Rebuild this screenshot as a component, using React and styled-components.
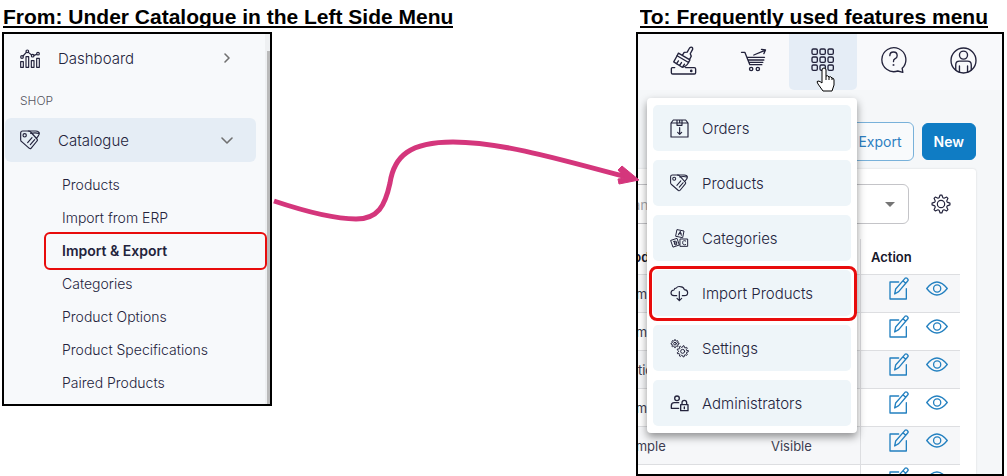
import React from 'react'
import styled, { createGlobalStyle } from 'styled-components'

const GlobalStyle = createGlobalStyle`
    * {
        box-sizing: border-box;
    }
    body {
        margin: 0;
        background: #fff;
        font-family: Inter, 'Liberation Sans', sans-serif;
        color: #23233c;
    }
    a {
        color: inherit;
        text-decoration: none;
    }
    ul {
        margin: 0;
        padding: 0;
        list-style: none;
    }
`

const Page = styled.main`
    padding: 0 3px 0 2px;
`

const Headings = styled.header`
    display: flex;
    justify-content: space-between;
    padding: 0 16px 0 1px;
    height: 32px;
`

const Heading = styled.h2`
    margin: 0;
    height: 28px;
    padding-top: 4px;
    overflow: hidden;
    border-bottom: 2px solid #000;
    font: bold 21px/26px 'Liberation Sans', Arial, sans-serif;
    white-space: nowrap;
    color: #000;
`

const Columns = styled.div`
    display: grid;
    grid-template-columns: 270px 1fr 368px;
    align-items: start;
`

const Icon = styled.svg`
    display: block;
    flex: none;
    fill: none;
    stroke: currentColor;
    stroke-width: ${props => props.$stroke || 4};
    stroke-linejoin: round;
    stroke-linecap: round;
`

/* left side menu */

const SidePanel = styled.nav`
    display: grid;
    grid-template-columns: 1fr 5px;
    border: 2px solid #000;
    background: #f7f9fb;
`

const SideMenu = styled.div`
    padding: 2px 0 5px;
`

const SideLink = styled.a`
    display: grid;
    grid-template-columns: 38px 1fr 12px;
    align-items: center;
    height: 44px;
    margin: 0 9px 0 1px;
    padding: 0 23px 0 15px;
    border-radius: 6px;
    font-size: 15px;
    font-weight: 300;
    background: ${props => (props.$open ? '#e5edf5' : 'transparent')};
    svg:last-child {
        color: #707070;
    }
`

const SideCaption = styled.div`
    padding: 14px 16px 10px;
    font-size: 12px;
    line-height: 14px;
    font-weight: 300;
    color: #55555f;
`

const SubMenu = styled.ul`
    padding: 6px 0 0 40px;
`

const SubLink = styled.a`
    display: block;
    position: relative;
    padding-left: 18px;
    font-size: 14px;
    line-height: 33px;
    font-weight: ${props => (props.$active ? 600 : 300)};
    &::after {
        content: '';
        display: ${props => (props.$active ? 'block' : 'none')};
        position: absolute;
        inset: -2px -2px -3px 0;
        border: 2px solid #e80c0c;
        border-radius: 6px;
    }
`

const ScrollTrack = styled.div`
    padding: 17px 0 0 2px;
    background: #eef0f2;
    &::before {
        content: '';
        display: block;
        height: 100%;
        background: #bababa;
    }
`

const Arrow = styled.svg`
    position: relative;
    z-index: 3;
    display: block;
    width: 100%;
    overflow: visible;
    fill: none;
    stroke: #d4367c;
    stroke-width: 5;
`

/* right window */

const AppPanel = styled.section`
    position: relative;
    display: flex;
    justify-content: flex-end;
    height: calc(100vh - 32px);
    overflow: hidden;
    border: 2px solid #000;
    background: #f5f7f9;
`

const AppContent = styled.div`
    flex: none;
    width: 432px;
`

const TopBar = styled.div`
    display: flex;
    justify-content: flex-end;
    gap: 2px;
    padding-right: 5px;
    background: #f8f9fb;
`

const TopButton = styled.button`
    display: grid;
    place-items: center;
    width: 68px;
    height: 56px;
    padding: 0 0 4px;
    border: 0;
    border-radius: 0 0 5px 5px;
    color: #23233c;
    background: ${props => (props.$active ? '#e5edf6' : 'transparent')};
`

const Actions = styled.div`
    display: flex;
    justify-content: flex-end;
    align-items: center;
    gap: 8px;
    padding: 32px 26px 8px;
`

const Button = styled.button`
    height: ${props => (props.$primary ? '37px' : '39px')};
    padding: 0 11px;
    border: 1px solid ${props => (props.$primary ? '#0f7cc4' : '#78b1da')};
    border-radius: 6px;
    font: ${props => (props.$primary ? 600 : 400)} 14px/20px Inter, sans-serif;
    color: ${props => (props.$primary ? '#fff' : '#2d7fc1')};
    background: ${props => (props.$primary ? '#0f7cc4' : '#f8fafc')};
`

const Card = styled.div`
    margin: 0 26px 0 6px;
    padding: 15px 16px 0;
    border-radius: 3px;
    background: #fff;
    box-shadow: 0 0 2px rgba(0, 0, 0, 0.15);
`

const Filters = styled.div`
    display: flex;
    gap: 13px;
    align-items: center;
    padding: 0 9px 15px 0;
`

const SearchInput = styled.input`
    flex: 1;
    min-width: 0;
    height: 40px;
    padding: 0 25px;
    border: 1px solid #c4c4c8;
    border-radius: 6px;
    font: 14px Inter, sans-serif;
    &::placeholder {
        color: #a8a8ac;
        opacity: 1;
    }
`

const SelectWrap = styled.label`
    display: grid;
    grid-template-columns: 1fr 10px;
    align-items: center;
    width: 100px;
    padding-right: 13px;
    border: 1px solid #c4c4c8;
    border-radius: 6px;
    fill: #757575;
`

const Select = styled.select`
    appearance: none;
    height: 38px;
    border: 0;
    background: transparent;
`

const SettingsButton = styled.button`
    padding: 0;
    margin-left: 9px;
    border: 0;
    color: #23233c;
    background: transparent;
`

const Table = styled.table`
    width: 100%;
    table-layout: fixed;
    border-collapse: separate;
    border-spacing: 0;
    font-size: 13px;
    th, td {
        padding: 0;
        text-align: left;
        border-bottom: 1px solid #dddee1;
    }
    th {
        height: 36px;
        font-weight: 600;
        color: #16162a;
    }
    td {
        height: 38px;
        color: #3d3d50;
    }
    th:first-child, td:first-child {
        width: 179px;
        padding-left: 28px;
    }
    th:last-child, td:last-child {
        width: 100px;
        border-left: 1px solid #dddee1;
    }
    th:last-child {
        padding-left: 10px;
    }
    tbody tr:nth-child(odd) {
        background: #f6f7f9;
    }
`

const RowActions = styled.div`
    display: flex;
    align-items: center;
    gap: 17px;
    padding: 0 0 11px 28px;
    color: #2380c0;
`

const Menu = styled.nav`
    position: absolute;
    z-index: 2;
    top: 64px;
    right: 145px;
    display: grid;
    gap: 9px;
    width: 210px;
    padding: 7px 6px;
    border-radius: 4px;
    background: #fff;
    box-shadow: 0 4px 9px rgba(0, 0, 0, 0.42);
`

const MenuLink = styled.a`
    position: relative;
    display: grid;
    grid-template-columns: 32px 1fr;
    align-items: center;
    height: 46px;
    padding-left: 17px;
    border-radius: 5px;
    font-size: 15px;
    font-weight: 300;
    color: #23233c;
    background: #eef5f9;
    &::after {
        content: '';
        display: ${props => (props.$marked ? 'block' : 'none')};
        position: absolute;
        inset: -4px -6px -5px -4px;
        border: 3px solid #e80c0c;
        border-radius: 8px;
    }
`

const Pointer = styled.svg`
    position: absolute;
    z-index: 3;
    top: 33px;
    right: 167px;
`

const ChartIcon = () => (
    <Icon width="20" height="19" viewBox="60 145 60 57" $stroke={3.5}>
        <path d="M62 183h8v17h-8zM78 168h8v32h-8zM94 180h8v20h-8zM110 173h8v27h-8z" />
        <circle cx="66" cy="169" r="4" />
        <circle cx="82" cy="152" r="4" />
        <circle cx="98" cy="165" r="4" />
        <circle cx="114" cy="159" r="4" />
        <path d="M69 166l10-11M85 155l10 8M102 164l8-3" />
    </Icon>
)

const TagsIcon = ({ size = 20 }) => (
    <Icon width={size} height={size} viewBox="60 391 60 60" $stroke={3.5}>
        <path d="M62 400q0-6 6-6h17q4 0 7 3l19 21q3 3 0 6l-18 22q-2 2-5 0l-23-20q-3-2-3-6z" />
        <path d="M85 394h22q11 1 11 7q0 4-4 9l-5 6M92 401q14-3 24 0" />
        <circle cx="74" cy="407" r="5" />
        <path d="M83 429l13-15M91 435l13-15" />
    </Icon>
)

const ChevronRight = () => (
    <Icon width="12" height="12" viewBox="0 0 12 12" $stroke={1.6}>
        <path d="M4 2l4 4-4 4" />
    </Icon>
)

const ChevronDown = () => (
    <Icon width="12" height="12" viewBox="0 0 12 12" $stroke={1.6}>
        <path d="M1 4l5 5 5-5" />
    </Icon>
)

const BrushIcon = () => (
    <Icon width="27" height="29" viewBox="120 137 80 86">
        <path d="M134 201h-7q-3 0-3 3v12q0 4 4 4h64q4 0 4-4v-11q0-4-4-4h-26" />
        <path d="M145 158l34 20-4 8-34-20zM157 164l5-8 9-1 7-12q4-4 7-2t2 6l-7 13 3 7-5 10" />
        <path d="M141 166l-10 18 25 16q11 0 19-14M139 190l6-9M148 195l6-9M157 200l6-9" />
        <circle cx="183" cy="211" r="2" fill="currentColor" />
    </Icon>
)

const CartIcon = () => (
    <Icon width="27" height="26" viewBox="330 141 80 78">
        <path d="M334 157h10l15 37h36M350 172h53M353 180h48M356 187h42M371 165l34-14M394 148l12 2-5 11" />
        <circle cx="363" cy="207" r="5" />
        <circle cx="383" cy="207" r="5" />
    </Icon>
)

const GridIcon = () => (
    <Icon width="24" height="24" viewBox="0 0 72 72">
        {[3, 27, 51].map(y =>
            [3, 27, 51].map(x => <rect key={`${x}-${y}`} x={x} y={y} width="16" height="16" rx="4" />)
        )}
    </Icon>
)

const HelpIcon = () => (
    <Icon width="27" height="28" viewBox="749 140 80 84">
        <path d="M815 207a36 36 0 1 0-13 8l15 4z" />
        <path d="M778 169q0-11 11-11t11 11q0 6-6 9t-5 9" />
        <circle cx="789" cy="197" r="1" />
    </Icon>
)

const UserIcon = () => (
    <Icon width="27" height="27" viewBox="959 140 80 80">
        <circle cx="999" cy="180" r="37" />
        <circle cx="999" cy="164" r="12" />
        <path d="M976 208v-15q0-11 11-11h24q11 0 11 11v15M987 213v-17M1011 213v-17" />
    </Icon>
)

const BoxIcon = () => (
    <Icon width="19" height="19" viewBox="120 75 57 57" $stroke={3.5}>
        <path d="M123 87l7-9h37l7 9v42h-51zM123 87h51M141 78v16h15V78M149 78v9M149 101v20M143 115l6 6 6-6" />
    </Icon>
)

const BlocksIcon = () => (
    <Icon width="19" height="19" viewBox="121 403 57 57" $stroke={3}>
        <path d="M143 405l20 4-4 20-20-4zM124 437l18-6 7 20-18 6zM152 433h22v22h-22z" />
        <path d="M146 421l6-11 3 12M148 417h6M133 440l3 11q8 0 5-6q2-7-8-5zM134 446l7-2M168 439q-9-4-9 5t9 6" />
    </Icon>
)

const CloudIcon = () => (
    <Icon width="19" height="19" viewBox="120 72 57 57" $stroke={3.5}>
        <path d="M140 107h-8q-9-1-9-8q0-8 9-9q1-6 7-6q4-6 12-4q10 1 12 9q10 1 10 9q0 9-10 9h-6M148 95v27M141 115l7 7 7-7" />
    </Icon>
)

const gearPath = (cx, cy, r, teeth) => {
    const points = []
    for (let i = 0; i < teeth * 4; i++) {
        const angle = ((i - 0.5) / (teeth * 4)) * Math.PI * 2
        const radius = i % 4 < 2 ? r : r * 0.72
        points.push(`${cx + Math.cos(angle) * radius} ${cy + Math.sin(angle) * radius}`)
    }
    return `M${points.join('L')}z`
}

const GearsIcon = () => (
    <Icon width="19" height="19" viewBox="120 235 57 57" $stroke={3}>
        <path d={gearPath(135, 249, 12, 8)} />
        <circle cx="135" cy="249" r="4" />
        <path d={gearPath(158, 272, 17, 9)} />
        <circle cx="158" cy="272" r="6" />
    </Icon>
)

const AdminIcon = () => (
    <Icon width="19" height="19" viewBox="120 397 57 57">
        <circle cx="141" cy="410" r="7" />
        <path d="M146 440h-22v-8q0-9 9-9h13M152 429h22v18h-22zM156 429v-6q0-7 7-7t7 7v6M163 436v5" />
    </Icon>
)

const GearIcon = () => (
    <Icon width="20" height="20" viewBox="0 0 60 60" $stroke={3.5}>
        <path d={gearPath(30, 30, 27, 8)} />
        <circle cx="30" cy="30" r="11" />
    </Icon>
)

const EditIcon = () => (
    <Icon width="20" height="23" viewBox="116 110 60 69" $stroke={4}>
        <path d="M145 125h-26v51h49v-31" />
        <path d="M133 161l3-15 28-32q3-3 6 0l2 2q3 3 0 6l-27 32zM158 121l8 8" />
    </Icon>
)

const EyeIcon = () => (
    <Icon width="22" height="15" viewBox="227 121 67 46" $stroke={4}>
        <path d="M229 144q31-40 63 0q-32 40-63 0z" />
        <circle cx="261" cy="144" r="11" />
    </Icon>
)

const subItems = [
    'Products',
    'Import from ERP',
    'Import & Export',
    'Categories',
    'Product Options',
    'Product Specifications',
    'Paired Products',
]

const topItems = [
    { label: 'Theme', icon: <BrushIcon /> },
    { label: 'Cart', icon: <CartIcon /> },
    { label: 'Features', icon: <GridIcon />, active: true },
    { label: 'Help', icon: <HelpIcon /> },
    { label: 'Account', icon: <UserIcon /> },
]

const menuItems = [
    { label: 'Orders', icon: <BoxIcon /> },
    { label: 'Products', icon: <TagsIcon size={18} /> },
    { label: 'Categories', icon: <BlocksIcon /> },
    { label: 'Import Products', icon: <CloudIcon />, marked: true },
    { label: 'Settings', icon: <GearsIcon /> },
    { label: 'Administrators', icon: <AdminIcon /> },
]

const rows = [
    { name: 'Sample' },
    { name: 'Sample' },
    { name: 'Option' },
    { name: 'Sample' },
    { name: 'Sample', status: 'Visible' },
    { name: '' },
]

/**
 * The side menu with the catalogue section opened
 */
const Sidebar = () => (
    <SidePanel>
        <SideMenu>
            <SideLink href="#"><ChartIcon />Dashboard<ChevronRight /></SideLink>
            <SideCaption>SHOP</SideCaption>
            <SideLink href="#" $open><TagsIcon />Catalogue<ChevronDown /></SideLink>
            <SubMenu>
                {subItems.map(item => (
                    <li key={item}>
                        <SubLink href="#" $active={item === 'Import & Export'}>{item}</SubLink>
                    </li>
                ))}
            </SubMenu>
        </SideMenu>
        <ScrollTrack />
    </SidePanel>
)

const ProductTable = () => (
    <Table>
        <thead>
            <tr>
                <th>Product</th>
                <th></th>
                <th>Action</th>
            </tr>
        </thead>
        <tbody>
            {rows.map((row, i) => (
                <tr key={i}>
                    <td>{row.name}</td>
                    <td>{row.status}</td>
                    <td>
                        <RowActions>
                            <a href="#" aria-label="Edit"><EditIcon /></a>
                            <a href="#" aria-label="View"><EyeIcon /></a>
                        </RowActions>
                    </td>
                </tr>
            ))}
        </tbody>
    </Table>
)

/**
 * The product page with the features menu opened over it
 */
const AppWindow = () => (
    <AppPanel>
        <AppContent>
            <TopBar>
                {topItems.map(item => (
                    <TopButton key={item.label} aria-label={item.label} $active={item.active}>
                        {item.icon}
                    </TopButton>
                ))}
            </TopBar>
            <Actions>
                <Button>Export</Button>
                <Button $primary>New</Button>
            </Actions>
            <Card>
                <Filters>
                    <SearchInput aria-label="Brand" placeholder="Brand" />
                    <SelectWrap>
                        <Select aria-label="Status" />
                        <svg width="10" height="5" viewBox="0 0 10 5"><path d="M0 0h10L5 5z" /></svg>
                    </SelectWrap>
                    <SettingsButton aria-label="Settings"><GearIcon /></SettingsButton>
                </Filters>
                <ProductTable />
            </Card>
        </AppContent>
        <Menu>
            {menuItems.map(item => (
                <MenuLink key={item.label} href="#" $marked={item.marked}>
                    {item.icon}
                    {item.label}
                </MenuLink>
            ))}
        </Menu>
        <Pointer width="19" height="25" viewBox="0 0 19 25" fill="#fff" stroke="#000" strokeLinejoin="round">
            <path d="M6 15V3q0-2 2-2t2 2v6q2-1 3 1q2-1 3 1q2 0 2 2v5l-2 6H7l-5-7q-2-3 0-3q2 0 4 2z" />
            <path d="M10 9v4M13 10v3M16 11v2" />
        </Pointer>
    </AppPanel>
)

const App = () => (
    <>
        <GlobalStyle />
        <Page>
            <Headings>
                <Heading>From: Under Catalogue in the Left Side Menu</Heading>
                <Heading>To: Frequently used features menu</Heading>
            </Headings>
            <Columns>
                <Sidebar />
                <Arrow viewBox="0 0 364 374">
                    <path d="M2 169C35 180 62 187 84 187C106 187 113 174 118 151C122 124 138 110 181 110C227 110 280 125 358 146" />
                    <path d="M346 147l1 5 20-4-17-14-4 4 7 8z" fill="#d4367c" strokeWidth="1" />
                </Arrow>
                <AppWindow />
            </Columns>
        </Page>
    </>
)

export default App
